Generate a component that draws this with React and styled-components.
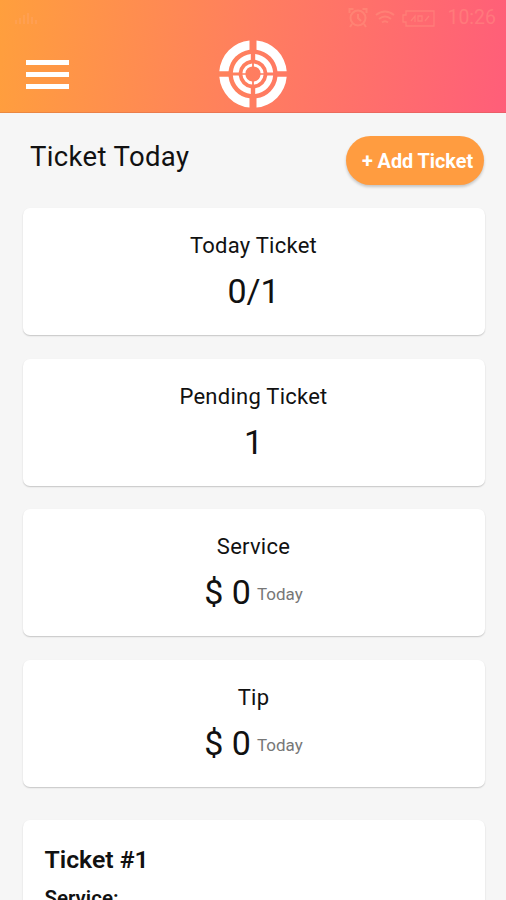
import React from 'react'
import styled, { createGlobalStyle } from 'styled-components'

const GlobalStyle = createGlobalStyle`
  * {
    box-sizing: border-box;
  }
  body {
    margin: 0;
    background: #f6f6f6;
    font-family: Roboto, sans-serif;
    color: #111;
  }
`

const Screen = styled.div`
  height: 900px;
  overflow: hidden;
`

const Header = styled.header`
  height: 113px;
  background: linear-gradient(96deg, #ff9f3d 0%, #ff7d60 51%, #ff5e79 100%);
  border-bottom: 1px solid rgba(190, 90, 70, 0.3);
`

const StatusBar = styled.div`
  height: 36px;
  padding: 0 10px 0 14px;
  display: flex;
  align-items: center;
  justify-content: space-between;
  color: #ffb08f;
  opacity: 0.28;
`

const StatusIcons = styled.div`
  display: flex;
  align-items: center;
  gap: 7px;
`

const Clock = styled.span`
  margin-left: 5px;
  font-size: 19.5px;
  line-height: 36px;
`

const NavBar = styled.div`
  display: grid;
  grid-template-columns: 1fr 68px 1fr;
  align-items: center;
  height: 75px;
`

const MenuButton = styled.button`
  width: 43px;
  height: 29px;
  margin: 1px 0 0 26px;
  padding: 0;
  border: 0;
  background: none;
  display: flex;
  flex-direction: column;
  justify-content: space-between;
`

const MenuBar = styled.span`
  width: 100%;
  height: 5px;
  background: #fff;
`

const TitleRow = styled.div`
  display: flex;
  justify-content: space-between;
  align-items: flex-start;
  height: 95px;
  padding: 23px 22px 0 30px;
`

const Title = styled.h1`
  margin: 0;
  padding-top: 1px;
  font-size: 27.5px;
  font-weight: 400;
  line-height: 40px;
  letter-spacing: 0.35px;
`

const AddButton = styled.button`
  width: 138px;
  height: 49px;
  border: 0;
  border-radius: 25px;
  padding: 2px 0 0 5px;
  background: #ff9c40;
  color: #fff;
  font-family: inherit;
  font-size: 19.8px;
  font-weight: 700;
  white-space: nowrap;
  box-shadow: 0 2px 3px rgba(0, 0, 0, 0.2);
`

const Cards = styled.main`
  display: flex;
  flex-direction: column;
  gap: 23.6px;
  padding: 0 21.5px 0 22.5px;
`

const Card = styled.section`
  height: 127px;
  padding-top: 23px;
  border-radius: 7px;
  background: #fff;
  box-shadow: 0 1px 1.5px rgba(0, 0, 0, 0.2);
  text-align: center;
`

const Label = styled.div`
  font-size: 22px;
  line-height: 30px;
  letter-spacing: 0.25px;
`

const Value = styled.div`
  margin-top: 9px;
  font-size: 34px;
  line-height: 42px;
`

const Period = styled.small`
  margin-left: 6px;
  font-size: 17px;
  line-height: 1;
  vertical-align: 4px;
  color: #777;
`

const TicketCard = styled(Card)`
  height: 200px;
  margin-top: 10px;
  padding: 24px 22px;
  text-align: left;
`

const TicketTitle = styled.h2`
  margin: 0;
  font-size: 24.8px;
  font-weight: 600;
  line-height: 32px;
`

const TicketField = styled.div`
  margin-top: 9px;
  font-size: 20.5px;
  font-weight: 600;
  line-height: 26px;
`

const stats = [
  { label: 'Today Ticket', value: '0/1' },
  { label: 'Pending Ticket', value: '1' },
  { label: 'Service', value: '$ 0', period: 'Today' },
  { label: 'Tip', value: '$ 0', period: 'Today' }
]

const SignalIcon = () => (
  <svg width='26' height='14' viewBox='0 0 26 14' stroke='currentColor' strokeWidth='1.5'>
    <path d='M2 13V9M6 13V7M10 13V4M14 13V2M18 13V6M22 13V9' />
  </svg>
)

const AlarmIcon = () => (
  <svg width='20' height='22' viewBox='0 0 20 22' fill='none' stroke='currentColor' strokeWidth='2'>
    <circle cx='10' cy='11' r='7.5' />
    <path d='M10 7v4l3 3M1.5 6V2h4M18.5 6V2h-4M4 17l-2 3M16 17l2 3' />
  </svg>
)

const WifiIcon = () => (
  <svg width='20' height='16' viewBox='0 0 20 16' fill='none' stroke='currentColor' strokeWidth='2'>
    <path d='M1 5Q10-2 19 5M4 9Q10 4 16 9M7 12.5Q10 10 13 12.5' />
  </svg>
)

const BatteryIcon = () => (
  <svg width='33' height='17' viewBox='0 0 33 17' fill='none' stroke='currentColor' strokeWidth='1.3'>
    <path d='M4 1h28v15H4v-4H1V5h3z' />
    <path d='M9 11l4-5v6M16 6h4v5h-4zM23 11l4-5' />
  </svg>
)

// Three rings, each cut into quarters by straight gaps
const rings = [
  { outer: 33.8, inner: 24.6, gapX: 7, gapY: 5.5 },
  { outer: 20.2, inner: 14.4, gapX: 4.4, gapY: 3.2 },
  { outer: 10.6, inner: 7.6, gapX: 1.8, gapY: 1.6 }
]

const quarters = [[1, 1], [1, -1], [-1, 1], [-1, -1]]

const quarterPath = ({ outer, inner, gapX, gapY }) => {
  const x = gapX / 2
  const y = gapY / 2
  const at = (r, d) => Math.sqrt(r * r - d * d)
  return `M${x} ${at(outer, x)}A${outer} ${outer} 0 0 0 ${at(outer, y)} ${y}H${at(inner, y)}A${inner} ${inner} 0 0 1 ${x} ${at(inner, x)}Z`
}

const Logo = () => (
  <svg width='68' height='68' viewBox='-34 -34 68 68' fill='#fff'>
    {rings.map(ring =>
      quarters.map(([sx, sy]) => (
        <path
          key={`${ring.outer}${sx}${sy}`}
          d={quarterPath(ring)}
          transform={`scale(${sx} ${sy})`}
        />
      ))
    )}
  </svg>
)

const App = () => (
  <Screen>
    <GlobalStyle />
    <Header>
      <StatusBar>
        <SignalIcon />
        <StatusIcons>
          <AlarmIcon />
          <WifiIcon />
          <BatteryIcon />
          <Clock>10:26</Clock>
        </StatusIcons>
      </StatusBar>
      <NavBar>
        <MenuButton aria-label='Menu'>
          <MenuBar />
          <MenuBar />
          <MenuBar />
        </MenuButton>
        <Logo />
      </NavBar>
    </Header>
    <TitleRow>
      <Title>Ticket Today</Title>
      <AddButton>+ Add Ticket</AddButton>
    </TitleRow>
    <Cards>
      {stats.map(({ label, value, period }) => (
        <Card key={label}>
          <Label>{label}</Label>
          <Value>
            {value}
            {period && <Period>{period}</Period>}
          </Value>
        </Card>
      ))}
      <TicketCard>
        <TicketTitle>Ticket #1</TicketTitle>
        <TicketField>Service:</TicketField>
      </TicketCard>
    </Cards>
  </Screen>
)

export default App
